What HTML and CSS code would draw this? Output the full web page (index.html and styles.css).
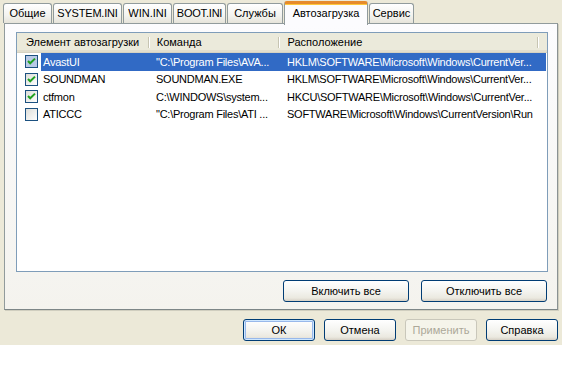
FILE: index.html
```html
<!DOCTYPE html>
<html lang="ru">
<head>
<meta charset="utf-8">
<link rel="stylesheet" href="styles.css">
</head>
<body>
<div class="dialog">
  <div class="tabs">
    <div class="tab tab-general">Общие</div>
    <div class="tab tab-system">SYSTEM.INI</div>
    <div class="tab tab-win">WIN.INI</div>
    <div class="tab tab-boot">BOOT.INI</div>
    <div class="tab tab-services">Службы</div>
    <div class="tab tab-startup active">Автозагрузка</div>
    <div class="tab tab-tools">Сервис</div>
  </div>
  <div class="panel">
    <div class="list">
      <div class="header">
        <div class="hcell">Элемент автозагрузки</div>
        <div class="hcell">Команда</div>
        <div class="hcell">Расположение</div>
        <div class="hcell hcell-rest"></div>
      </div>
      <div class="row selected">
        <span class="check hover"><svg width="13" height="13" viewBox="0 0 13 13"><rect x="0.5" y="0.5" width="12" height="12" fill="#b9c9e6" stroke="#1c5180"/><path d="M3 6 L5.2 8.3 L10 3.6" fill="none" stroke="#21a121" stroke-width="2"/></svg></span>
        <div class="cells">
          <span class="cell c1">AvastUI</span>
          <span class="cell c2">"C:\Program Files\AVA...</span>
          <span class="cell c3">HKLM\SOFTWARE\Microsoft\Windows\CurrentVer...</span>
        </div>
      </div>
      <div class="row">
        <span class="check"><svg width="13" height="13" viewBox="0 0 13 13"><defs><linearGradient id="g1" x1="0" y1="0" x2="1" y2="1"><stop offset="0" stop-color="#dcdcd7"/><stop offset="1" stop-color="#ffffff"/></linearGradient></defs><rect x="0.5" y="0.5" width="12" height="12" fill="url(#g1)" stroke="#1c5180"/><path d="M3 6 L5.2 8.3 L10 3.6" fill="none" stroke="#21a121" stroke-width="2"/></svg></span>
        <div class="cells">
          <span class="cell c1">SOUNDMAN</span>
          <span class="cell c2">SOUNDMAN.EXE</span>
          <span class="cell c3">HKLM\SOFTWARE\Microsoft\Windows\CurrentVer...</span>
        </div>
      </div>
      <div class="row">
        <span class="check"><svg width="13" height="13" viewBox="0 0 13 13"><rect x="0.5" y="0.5" width="12" height="12" fill="url(#g1)" stroke="#1c5180"/><path d="M3 6 L5.2 8.3 L10 3.6" fill="none" stroke="#21a121" stroke-width="2"/></svg></span>
        <div class="cells">
          <span class="cell c1">ctfmon</span>
          <span class="cell c2">C:\WINDOWS\system...</span>
          <span class="cell c3">HKCU\SOFTWARE\Microsoft\Windows\CurrentVer...</span>
        </div>
      </div>
      <div class="row">
        <span class="check"><svg width="13" height="13" viewBox="0 0 13 13"><rect x="0.5" y="0.5" width="12" height="12" fill="url(#g1)" stroke="#1c5180"/></svg></span>
        <div class="cells">
          <span class="cell c1">ATICCC</span>
          <span class="cell c2">"C:\Program Files\ATI ...</span>
          <span class="cell c3">SOFTWARE\Microsoft\Windows\CurrentVersion\Run</span>
        </div>
      </div>
    </div>
    <div class="panel-actions">
      <button class="btn btn-wide">Включить все</button>
      <button class="btn btn-wide">Отключить все</button>
    </div>
  </div>
  <div class="footer">
    <button class="btn btn-default">ОК</button>
    <button class="btn">Отмена</button>
    <button class="btn" disabled>Применить</button>
    <button class="btn">Справка</button>
  </div>
</div>
</body>
</html>
```

FILE: styles.css
```css
* { box-sizing: border-box; }
html, body { margin: 0; padding: 0; background: #ffffff; }
body {
  font-family: "Liberation Sans", Arial, sans-serif;
  font-size: 11px;
  color: #000;
}
.dialog {
  background: #ece9d8;
  height: 345px;
  padding-top: 1px;
}
.tabs {
  display: flex;
  align-items: flex-end;
  height: 22px;
  padding-left: 3px;
  position: relative;
  z-index: 2;
}
.tab {
  height: 20px;
  border: 1px solid #919b9c;
  border-bottom: none;
  border-radius: 3px 3px 0 0;
  background: linear-gradient(#ffffff, #f3f3ef 60%, #e6e4da);
  padding: 0;
  margin-right: 1px;
  line-height: 18px;
  text-align: center;
  white-space: nowrap;
}
.tab-general { width: 49px; }
.tab-system { width: 69px; letter-spacing: -0.2px; }
.tab-win { width: 49px; }
.tab-boot { width: 53px; letter-spacing: -0.2px; }
.tab-services { width: 56px; }
.tab-startup { width: 84px; }
.tab-tools { width: 45px; }
.tab.active {
  height: 24px;
  margin-bottom: -2px;
  background: #fcfcfe;
  border-top: 3px solid #e68b2c;
  box-shadow: inset 0 1px 0 #ffc83c;
  line-height: 19px;
  position: relative;
}
.panel {
  margin: 0 4px;
  height: 287px;
  border: 1px solid #919b9c;
  border-right-color: #8a9293;
  border-bottom-color: #7d8687;
  background: linear-gradient(#fcfcfe, #f4f3ee);
  padding: 8px 9px 0 11px;
  box-shadow: 1px 1px 0 #d0cebf;
}
.list {
  height: 240px;
  border: 1px solid #7f9db9;
  background: #fff;
}
.header {
  display: flex;
  height: 20px;
  background: #ebeadb;
  border-bottom: 1px solid #d6d2c2;
  box-shadow: inset 0 -2px 0 #e2dece;
}
.hcell {
  position: relative;
  line-height: 18px;
  padding-left: 9px;
  white-space: nowrap;
}
.hcell:nth-child(1) { width: 133px; }
.hcell:nth-child(2) { width: 131px; padding-left: 8px; }
.hcell:nth-child(3) { width: 262px; }
.hcell-rest { flex: 1; }
.hcell::after {
  content: "";
  position: absolute;
  right: 0;
  top: 4px;
  bottom: 4px;
  width: 1px;
  background: #c7c5b2;
  box-shadow: 1px 0 0 #fff;
}
.hcell-rest::after { display: none; }
.row {
  display: flex;
  align-items: center;
  height: 17.5px;
}
.check {
  display: flex;
  width: 13px;
  height: 13px;
  margin-left: 8px;
  margin-right: 3px;
}
.cells {
  display: flex;
  height: 100%;
  align-items: center;
  width: 505px;
}
.cell { white-space: nowrap; overflow: hidden; letter-spacing: -0.25px; }
.c1 { width: 109px; padding-left: 2px; }
.c2 { width: 131px; padding-left: 6px; }
.c3 { width: 265px; padding-left: 6px; }
.row.selected .cells { background: #316ac5; color: #fff; }
.panel-actions {
  display: flex;
  justify-content: flex-end;
  gap: 12px;
  margin-top: 8px;
  padding-right: 1px;
}
.btn {
  font-family: inherit;
  font-size: 11px;
  font-weight: normal;
  color: #000;
  height: 22px;
  width: 72px;
  border: 1px solid #003c74;
  border-radius: 3px;
  background: linear-gradient(#ffffff, #f4f4f0 50%, #ebe9e0 85%, #d6d0c5);
  padding: 0;
}
.btn-wide { width: 126px; }
.btn-default {
  box-shadow: inset 0 0 0 1px #cee7ff, inset 0 0 0 2px #98b8ea;
}
.btn:disabled {
  color: #aca899;
  border-color: #c9c7ba;
  background: #f5f4ea;
}
.footer {
  display: flex;
  justify-content: flex-end;
  gap: 9px;
  margin-top: 9px;
  padding-right: 4px;
}
```
